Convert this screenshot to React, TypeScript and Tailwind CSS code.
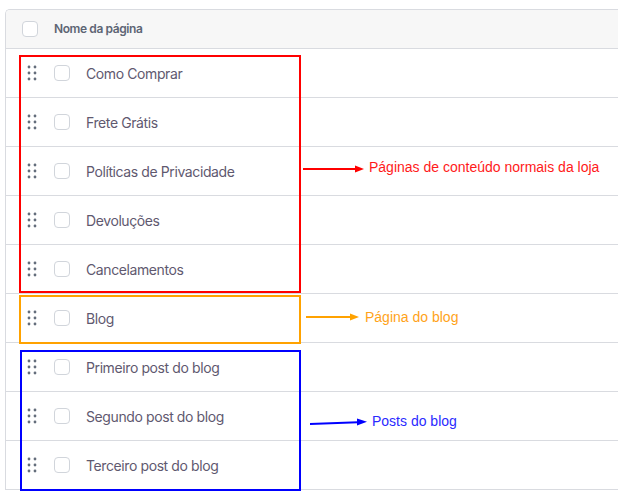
import React from 'react'

const pages = [
  'Como Comprar',
  'Frete Grátis',
  'Políticas de Privacidade',
  'Devoluções',
  'Cancelamentos',
  'Blog',
  'Primeiro post do blog',
  'Segundo post do blog',
  'Terceiro post do blog',
]

function DragHandle() {
  return (
    <svg width="12" height="16" viewBox="0 0 12 16" className="text-[#646d7b]" fill="currentColor">
      <circle cx="3" cy="2" r="1.4" />
      <circle cx="9" cy="2" r="1.4" />
      <circle cx="3" cy="8" r="1.4" />
      <circle cx="9" cy="8" r="1.4" />
      <circle cx="3" cy="14" r="1.4" />
      <circle cx="9" cy="14" r="1.4" />
    </svg>
  )
}

function Checkbox() {
  return <span className="block w-4 h-4 rounded-[4px] border border-[#d1d5db] bg-white" />
}

function Row({ name }: { name: string }) {
  return (
    <div className="h-[49px] flex items-center border-b border-[#d9dbe0]">
      <div className="w-[48px] pl-[20px] flex items-center">
        <DragHandle />
      </div>
      <div className="w-[32px] flex items-center">
        <Checkbox />
      </div>
      <span className="text-[14px] tracking-[-0.4px] text-[#5f596f]">{name}</span>
    </div>
  )
}

export default function App() {
  return (
    <div className="relative w-[618px] h-[492px] bg-white overflow-hidden pt-[9px] pl-[5px] font-['Inter',sans-serif]">
      <div className="w-[660px] border-l border-t border-[#d9dbe0] rounded-tl-[5px] overflow-hidden">
        <div className="h-[39px] flex items-center bg-[#f7f7f7] border-b border-[#d9dbe0]">
          <div className="w-[48px] pl-[16px] flex items-center">
            <Checkbox />
          </div>
          <span className="text-[12px] tracking-[-0.4px] font-semibold text-[#5d6574]">Nome da página</span>
        </div>
        {pages.map((p) => (
          <Row key={p} name={p} />
        ))}
      </div>

      {/* annotations */}
      <div className="absolute left-[19px] top-[55px] w-[282px] h-[238px] border-2 border-[#ff0000]" />
      <div className="absolute left-[19px] top-[295px] w-[282px] h-[49px] border-2 border-[#ffa200]" />
      <div className="absolute left-[20px] top-[350px] w-[281px] h-[141px] border-2 border-[#0000ff]" />

      <svg className="absolute left-0 top-0 pointer-events-none" width="618" height="492">
        <line x1="303" y1="169" x2="356" y2="169" stroke="#ff0000" strokeWidth="2" />
        <polygon points="355,165.5 364,169 355,172.5" fill="#ff0000" />
        <line x1="306" y1="317" x2="351" y2="317" stroke="#ffa200" strokeWidth="2" />
        <polygon points="350,313.5 359,317 350,320.5" fill="#ffa200" />
        <line x1="310" y1="424" x2="358" y2="422.3" stroke="#0000ff" strokeWidth="2" />
        <polygon points="357,418.5 367,421.8 357,425.5" fill="#0000ff" />
      </svg>

      <span className="absolute left-[369px] top-[159px] leading-4 text-[14px] text-[#ff1a1a] font-['Liberation_Sans',Arial,sans-serif] whitespace-nowrap">
        Páginas de conteúdo normais da loja
      </span>
      <span className="absolute left-[365px] top-[309px] leading-4 text-[14px] text-[#ffa31a] font-['Liberation_Sans',Arial,sans-serif] whitespace-nowrap">
        Página do blog
      </span>
      <span className="absolute left-[372px] top-[413px] leading-4 text-[14px] text-[#2a2aff] font-['Liberation_Sans',Arial,sans-serif] whitespace-nowrap">
        Posts do blog
      </span>
    </div>
  )
}
